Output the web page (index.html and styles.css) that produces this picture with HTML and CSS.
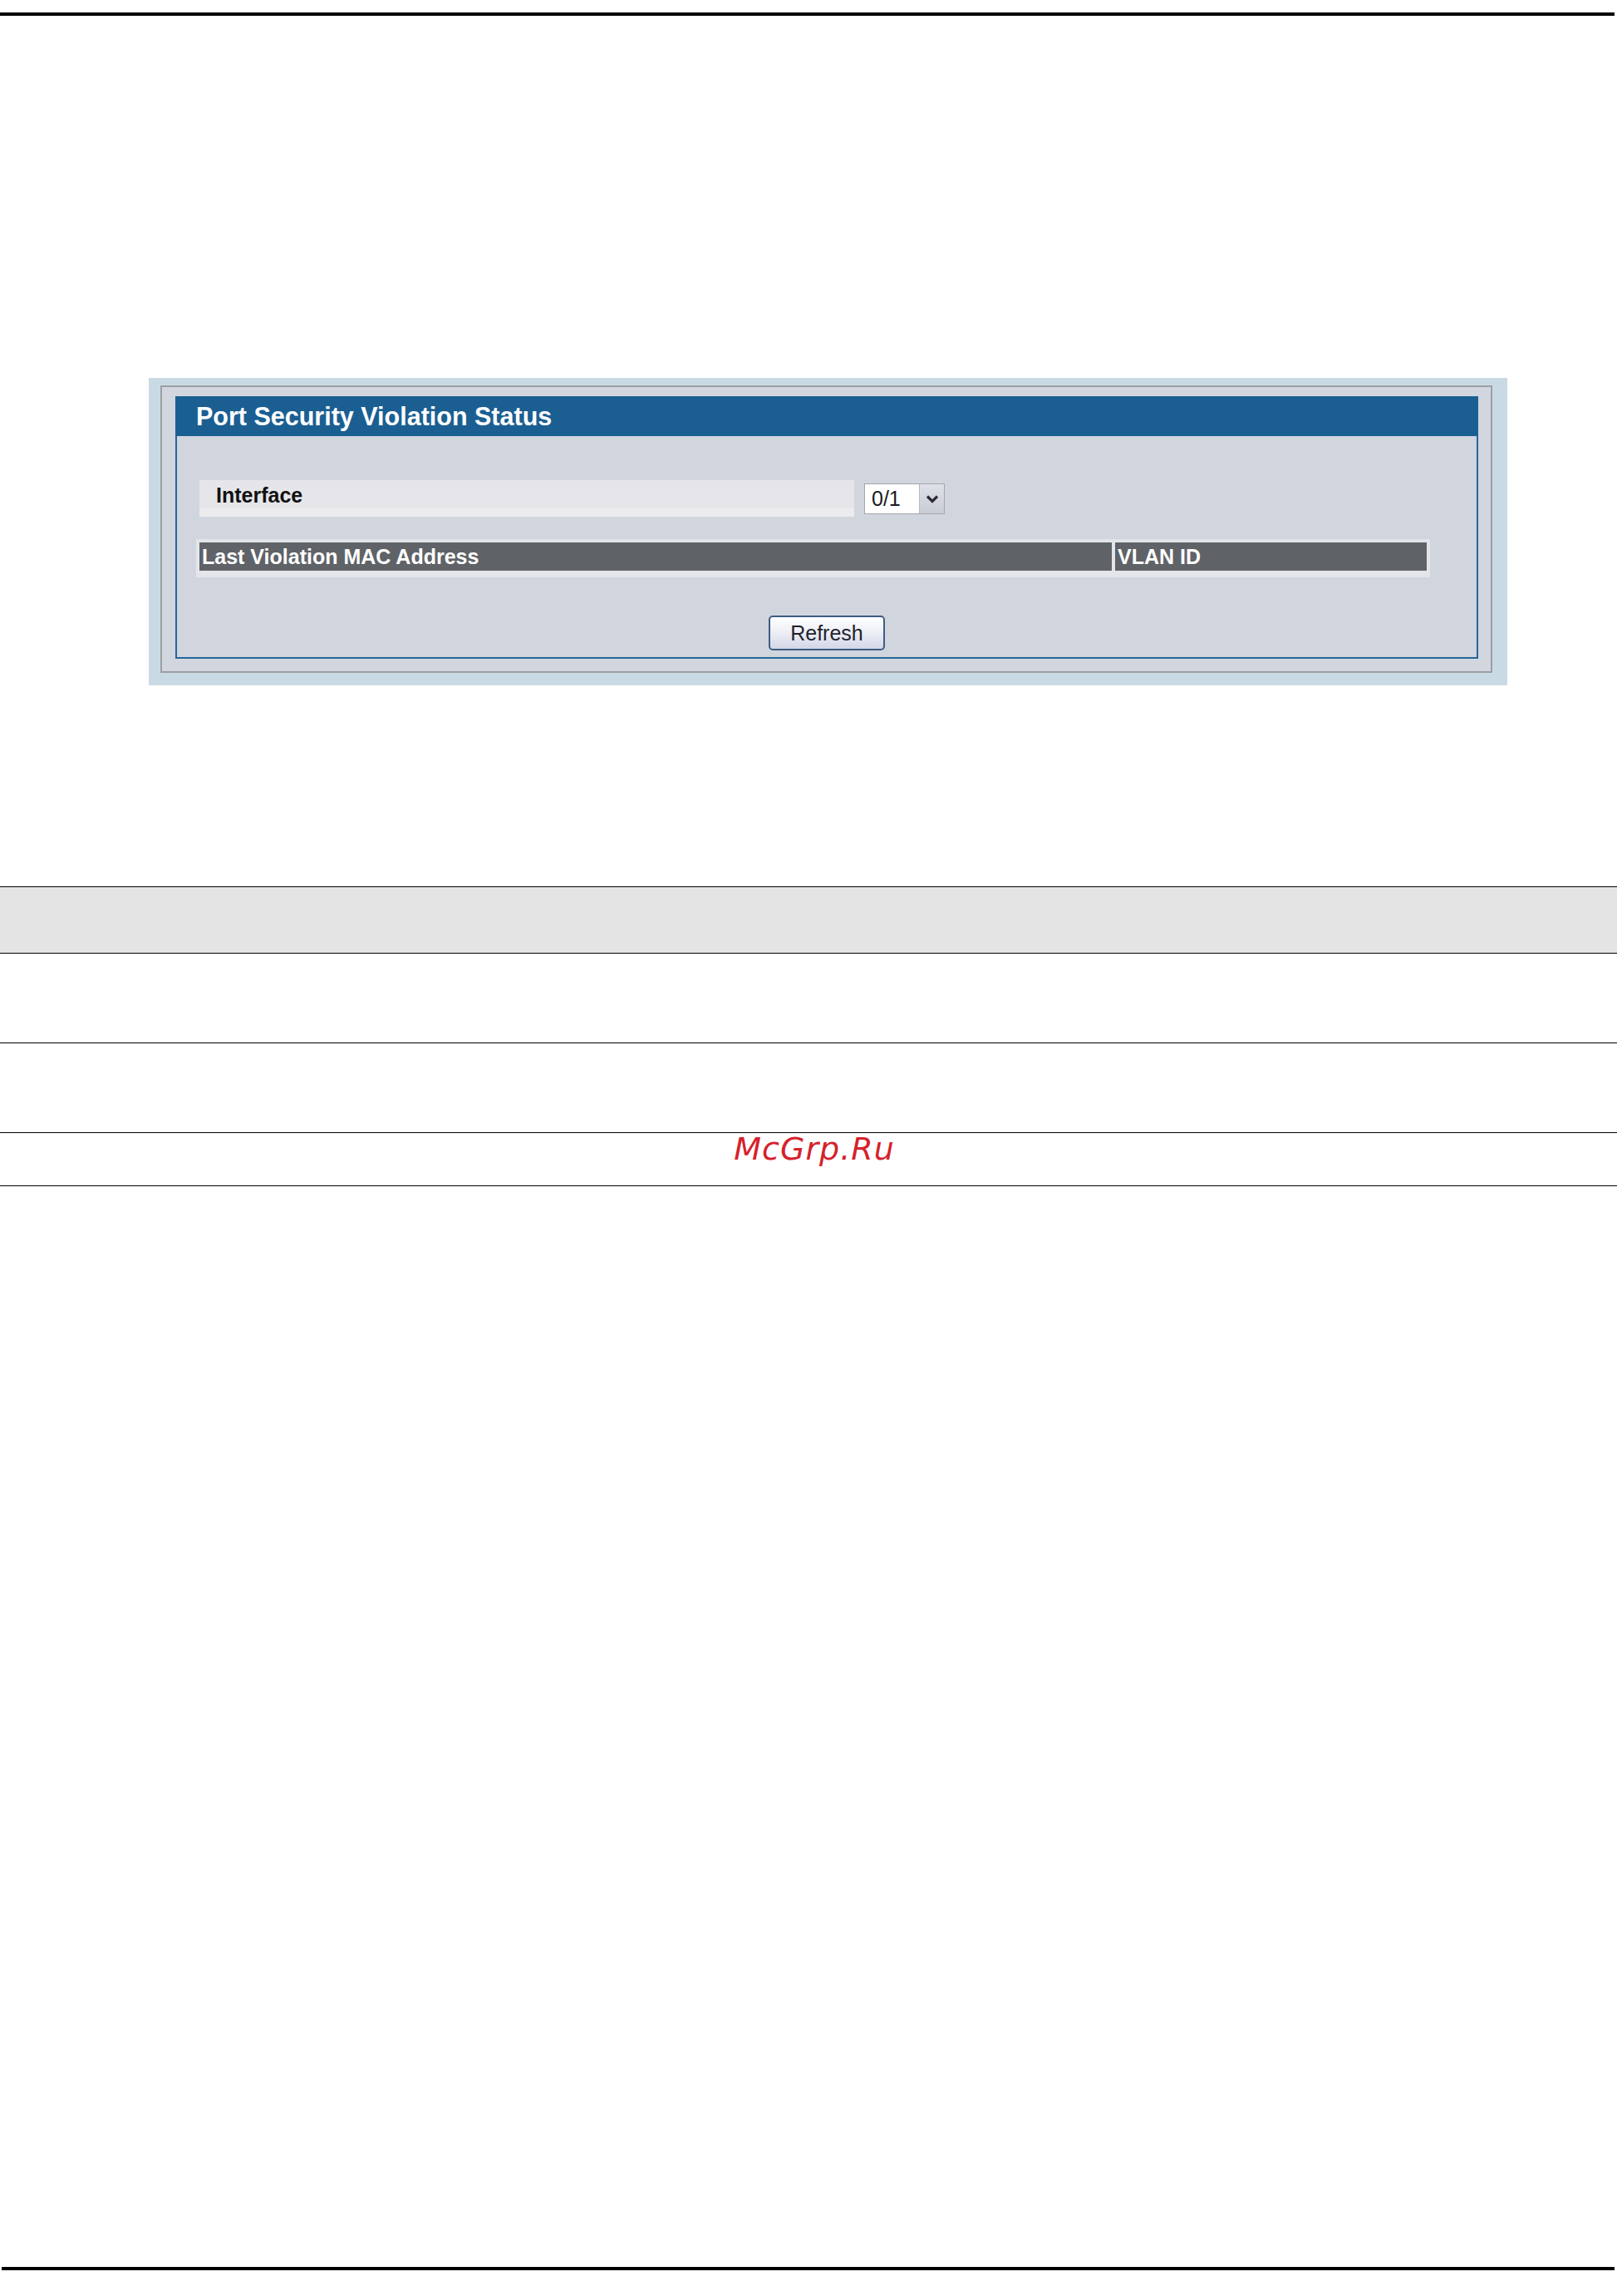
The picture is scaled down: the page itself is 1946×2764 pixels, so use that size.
FILE: index.html
```html
<!DOCTYPE html>
<html lang="en">
<head>
<meta charset="utf-8">
<title>Port Security Violation Status</title>
<link rel="stylesheet" href="styles.css">
</head>
<body>
<div class="rule-top"></div>

<div class="figure">
  <div class="frame">
    <div class="panel">
      <div class="panel-head">Port Security Violation Status</div>
      <div class="panel-body">
        <div class="field-row">
          <div class="field-label">Interface</div>
          <div class="select">
            <span class="select-value">0/1</span>
            <span class="select-btn">
              <svg width="16" height="11" viewBox="0 0 16 11"><path d="M2 2.5 L8 8.5 L14 2.5" fill="none" stroke="#2b2b33" stroke-width="3.2"/></svg>
            </span>
          </div>
        </div>
        <div class="data-table">
          <div class="th th-mac">Last Violation MAC Address</div>
          <div class="th th-vlan">VLAN ID</div>
        </div>
        <div class="actions">
          <button class="btn" type="button">Refresh</button>
        </div>
      </div>
    </div>
  </div>
</div>

<div class="doc-table">
  <div class="doc-row doc-row-head"></div>
  <div class="doc-row doc-row-tall"></div>
  <div class="doc-row doc-row-tall"></div>
  <div class="doc-row doc-row-mark"><span class="watermark">McGrp.Ru</span></div>
</div>

<div class="rule-bottom"></div>
</body>
</html>
```

FILE: styles.css
```css
html, body {
  margin: 0;
  padding: 0;
  background: #ffffff;
}
body {
  width: 1946px;
  height: 2764px;
  font-family: "Liberation Sans", Arial, sans-serif;
  overflow: hidden;
}

.rule-top {
  margin-top: 15px;
  height: 4px;
  margin-right: 3px;
  background: #000;
}

.figure {
  box-sizing: border-box;
  margin: 436px 0 0 179px;
  width: 1635px;
  height: 370px;
  padding: 9px 18px 15px 14px;
  background: #cadae4;
}
.frame {
  box-sizing: border-box;
  width: 1603px;
  height: 346px;
  border: 2px solid #9c9fa4;
  background: #d1d6df;
  padding: 11px 15px 15px 16px;
}
.panel {
  box-sizing: border-box;
  width: 1568px;
  height: 316px;
  border: 2px solid #24679a;
  border-top: 0;
  display: flex;
  flex-direction: column;
}
.panel-head {
  margin: 0 -2px;
  height: 48px;
  line-height: 48px;
  padding-left: 25px;
  background: #1b5f92;
  color: #ffffff;
  font-weight: bold;
  font-size: 30.5px;
}
.panel-body {
  flex: 1;
  background: #d1d5de;
  padding: 53px 0 0 0;
  display: flex;
  flex-direction: column;
}
.field-row {
  display: flex;
  align-items: center;
  margin-left: 27px;
  height: 44px;
  gap: 12px;
}
.field-label {
  box-sizing: border-box;
  width: 788px;
  height: 44px;
  padding: 0 0 8px 20px;
  line-height: 36px;
  font-size: 25px;
  font-weight: bold;
  color: #111;
  background: linear-gradient(#e6e6ea 0, #e6e6ea 34px, #ececef 34px);
}
.select {
  box-sizing: border-box;
  display: flex;
  width: 97px;
  height: 37px;
  border: 1px solid #a5a7ab;
  background: #fff;
}
.select-value {
  box-sizing: border-box;
  width: 65px;
  padding-left: 8px;
  font-size: 25px;
  line-height: 35px;
  color: #1a1a22;
}
.select-btn {
  flex: 1;
  display: flex;
  align-items: center;
  justify-content: center;
  border-left: 1px solid #b6b8bd;
  background: linear-gradient(#dfe1e8, #c9ccd6);
}

.data-table {
  box-sizing: border-box;
  margin: 27px 0 0 23px;
  width: 1485px;
  height: 46px;
  padding: 4px 4px 8px 4px;
  background: #e3e5ea;
  display: grid;
  grid-template-columns: 1098px 375px;
  column-gap: 4px;
}
.th {
  background: #5f6368;
  color: #ffffff;
  font-weight: bold;
  font-size: 25px;
  line-height: 34px;
  padding-left: 3px;
  white-space: nowrap;
}

.actions {
  display: flex;
  justify-content: center;
  margin-top: 46px;
}
.btn {
  box-sizing: border-box;
  width: 140px;
  height: 42px;
  border: 2px solid #3f5c82;
  border-radius: 5px;
  background: linear-gradient(#ffffff 0%, #eef0f7 45%, #d3d6e6 100%);
  font-family: "Liberation Sans", Arial, sans-serif;
  font-size: 25px;
  color: #1f1f2e;
  padding: 0;
  line-height: 38px;
}

.doc-table {
  margin-top: 242px;
  border-bottom: 1px solid #000;
}
.doc-row {
  box-sizing: border-box;
  border-top: 1px solid #000;
}
.doc-row-head {
  height: 80px;
  background: #e4e4e4;
}
.doc-row-tall {
  height: 108px;
}
.doc-row-mark {
  height: 64px;
  text-align: center;
  padding-left: 14px;
}
.watermark {
  font-family: "DejaVu Sans", sans-serif;
  font-style: italic;
  font-size: 38px;
  line-height: 38px;
  letter-spacing: 1px;
  color: #d5222b;
}

.rule-bottom {
  margin-top: 1301px;
  margin-left: 2px;
  margin-right: 3px;
  height: 4px;
  background: #000;
}
```
